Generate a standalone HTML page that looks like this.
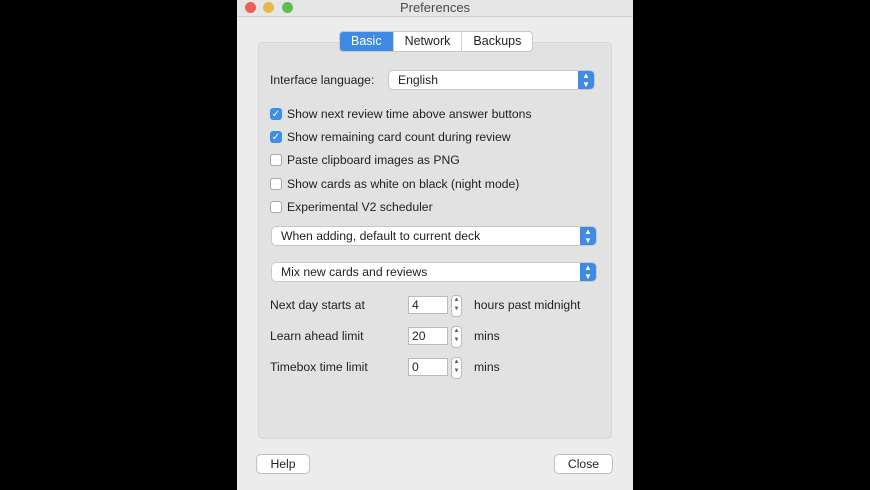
<!DOCTYPE html><html><head><style>
body{margin:0;width:870px;height:490px;background:#000;position:relative;overflow:hidden;font-family:"Liberation Sans",sans-serif;font-size:12.2px;color:#222}
.a{position:absolute}
.win{left:237px;top:0;width:396px;height:490px;background:#ececec}
.title{left:0;top:0;width:396px;height:16px;background:#e6e6e6;border-bottom:1px solid #d0d0d0;text-align:center;font-size:13px;line-height:16px;color:#4a4a4a}
.dot{top:2px;width:11px;height:11px;border-radius:50%}
.box{left:21px;top:42px;width:352px;height:395px;background:#e2e2e2;border:1px solid #d8d8d8;border-radius:4px}
.tabs{left:102px;top:31px;height:19px;display:flex;border:1px solid #c8c8c8;border-radius:4px;background:#fff;overflow:hidden;font-size:12.5px;line-height:19px}
.tabs div{padding:0 11px;border-left:1px solid #d0d0d0}
.cb{width:12px;height:12px;border-radius:3px;border:1px solid #aaa;background:#fff;box-sizing:border-box}
.cb.on{background:#3d8ee8;border-color:#3d8ee8;color:#fff;font-size:10px;line-height:11px;text-align:center}
.sel{height:18px;background:#fff;border-radius:4px;box-shadow:0 0 0 1px #c8c8c8;line-height:18px;padding-left:9px;box-sizing:border-box}
.sel .ar{position:absolute;right:0;top:0;width:16px;height:18px;background:#3f8ae4;border-radius:0 4px 4px 0;color:#fff;font-size:8px;text-align:center;line-height:9px}
.inp{width:40px;height:18px;background:#fff;border:1px solid #bbb;box-sizing:border-box;line-height:16px;padding-left:3px}
.st{width:9px;height:20px;border:1px solid #bbb;border-radius:4px;background:#fff;font-size:6px;line-height:9px;text-align:center;color:#555}
.btn{height:18px;background:#fff;border-radius:4px;box-shadow:0 0 0 1px #c0c0c0;text-align:center;line-height:18px}
</style></head><body>
<div class="a win">
<div class="a title">Preferences</div>
<div class="a dot" style="left:8px;background:#ec5f58"></div>
<div class="a dot" style="left:26px;background:#e8b948"></div>
<div class="a dot" style="left:45px;background:#5fbf4e"></div>
<div class="a box"></div>
<div class="a tabs"><div style="border:0;background:#3f8ae4;color:#fff">Basic</div><div>Network</div><div>Backups</div></div>
<div class="a" style="left:33px;top:73px">Interface language:</div>
<div class="a sel" style="left:152px;top:71px;width:205px">English<div class="ar">▲<br>▼</div></div>
<div class="a cb on" style="left:33px;top:108px">✓</div><div class="a" style="left:50px;top:107px">Show next review time above answer buttons</div>
<div class="a cb on" style="left:33px;top:131px">✓</div><div class="a" style="left:50px;top:130px">Show remaining card count during review</div>
<div class="a cb" style="left:33px;top:154px"></div><div class="a" style="left:50px;top:153px">Paste clipboard images as PNG</div>
<div class="a cb" style="left:33px;top:178px"></div><div class="a" style="left:50px;top:177px">Show cards as white on black (night mode)</div>
<div class="a cb" style="left:33px;top:201px"></div><div class="a" style="left:50px;top:200px">Experimental V2 scheduler</div>
<div class="a sel" style="left:35px;top:227px;width:324px">When adding, default to current deck<div class="ar">▲<br>▼</div></div>
<div class="a sel" style="left:35px;top:263px;width:324px">Mix new cards and reviews<div class="ar">▲<br>▼</div></div>
<div class="a" style="left:33px;top:298px">Next day starts at</div>
<div class="a inp" style="left:171px;top:296px">4</div><div class="a st" style="left:214px;top:295px">▲<br>▼</div><div class="a" style="left:237px;top:298px">hours past midnight</div>
<div class="a" style="left:33px;top:329px">Learn ahead limit</div>
<div class="a inp" style="left:171px;top:327px">20</div><div class="a st" style="left:214px;top:326px">▲<br>▼</div><div class="a" style="left:237px;top:329px">mins</div>
<div class="a" style="left:33px;top:360px">Timebox time limit</div>
<div class="a inp" style="left:171px;top:358px">0</div><div class="a st" style="left:214px;top:357px">▲<br>▼</div><div class="a" style="left:237px;top:360px">mins</div>
<div class="a btn" style="left:20px;top:455px;width:52px">Help</div>
<div class="a btn" style="left:318px;top:455px;width:57px">Close</div>
</div>
</body></html>
